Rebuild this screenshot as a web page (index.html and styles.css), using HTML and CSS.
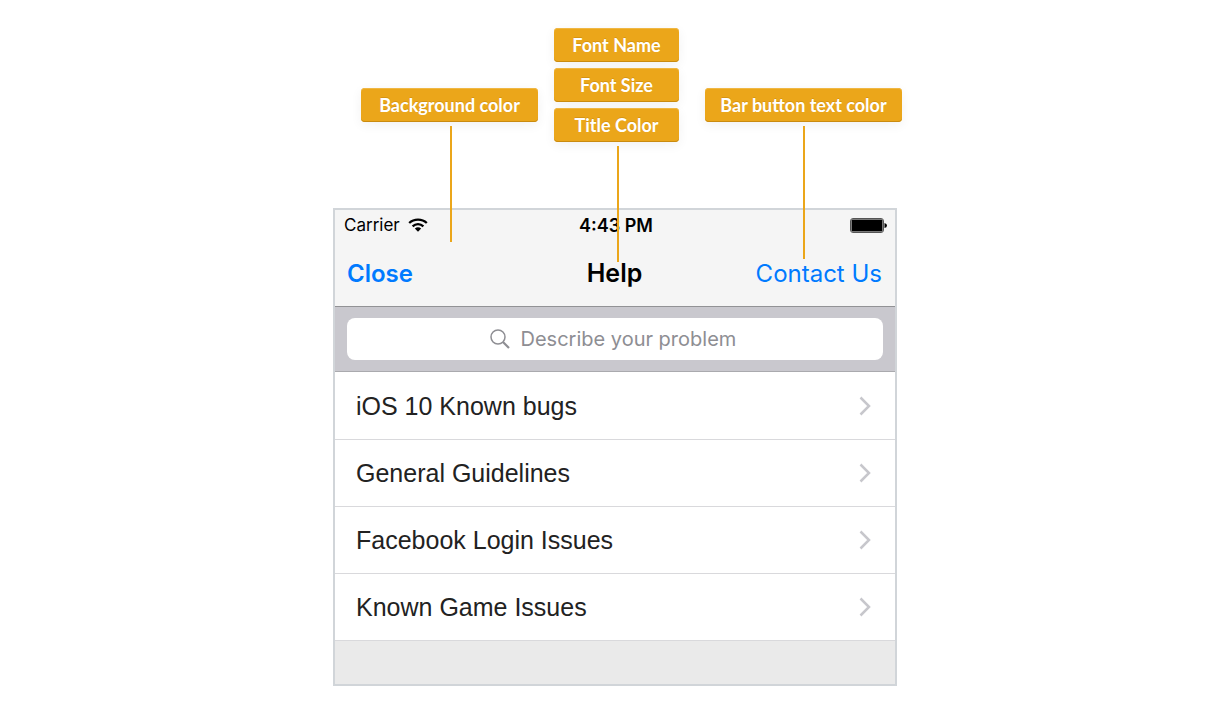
FILE: index.html
```html
<!DOCTYPE html>
<html lang="en">
<head>
<meta charset="utf-8">
<meta name="viewport" content="width=device-width, initial-scale=1">
<title>Help screen theming</title>
<link rel="stylesheet" href="styles.css">
</head>
<body>
<main class="guide">
  <div class="callouts">
    <div class="callout callout-background"><span class="tag">Background color</span></div>
    <div class="callout callout-title">
      <span class="tag">Font Name</span>
      <span class="tag">Font Size</span>
      <span class="tag">Title Color</span>
    </div>
    <div class="callout callout-button"><span class="tag">Bar button text color</span></div>
  </div>

  <section class="phone" aria-label="Help">
    <header class="top">
      <div class="status">
        <div class="carrier">
          <span>Carrier</span>
          <svg class="wifi" viewBox="0 0 20 14" aria-hidden="true">
            <path d="M1.200 5C6 .4 14 .4 18.800 5M4.600 8.300C7.700 5.300 12.300 5.300 15.400 8.300" fill="none" stroke="#000" stroke-width="2.300"/>
            <path d="M6.800 10.500Q10 7.800 13.200 10.500L10 13.700Z"/>
          </svg>
        </div>
        <span class="time">4:43 PM</span>
        <svg class="battery" viewBox="0 0 38 15" aria-hidden="true">
          <rect x=".5" y=".5" width="33" height="14" rx="2.500" fill="none" stroke="#555"/>
          <rect x="1.500" y="1.500" width="31" height="12" rx="1"/>
          <path d="M34.500 5q2.500 .5 2.500 2.500t-2.500 2.500z"/>
        </svg>
      </div>
      <nav class="bar">
        <button class="bar-button close" type="button">Close</button>
        <h1 class="title">Help</h1>
        <button class="bar-button contact" type="button">Contact Us</button>
      </nav>
    </header>

    <div class="search">
      <label class="field">
        <svg class="lens" viewBox="0 0 20 20" aria-hidden="true">
          <circle cx="8" cy="8" r="7" fill="none" stroke="#8e8e93" stroke-width="1.500"/>
          <path d="M13 13l6 6" stroke="#8e8e93" stroke-width="2.200"/>
        </svg>
        <input class="query" type="text" placeholder="Describe your problem" aria-label="Describe your problem">
      </label>
    </div>

    <ul class="topics">
      <li><a class="topic" href="#bugs">iOS 10 Known bugs<svg class="chevron" viewBox="0 0 12 20" aria-hidden="true"><path d="M1.500 1.500L10 10l-8.500 8.500"/></svg></a></li>
      <li><a class="topic" href="#guidelines">General Guidelines<svg class="chevron" viewBox="0 0 12 20" aria-hidden="true"><path d="M1.500 1.500L10 10l-8.500 8.500"/></svg></a></li>
      <li><a class="topic" href="#login">Facebook Login Issues<svg class="chevron" viewBox="0 0 12 20" aria-hidden="true"><path d="M1.500 1.500L10 10l-8.500 8.500"/></svg></a></li>
      <li><a class="topic" href="#game">Known Game Issues<svg class="chevron" viewBox="0 0 12 20" aria-hidden="true"><path d="M1.500 1.500L10 10l-8.500 8.500"/></svg></a></li>
    </ul>
  </section>
</main>
</body>
</html>
```
FILE: styles.css
```css
* { box-sizing: border-box; }

body {
  margin: 0;
  background: #fff;
  font-family: Inter, "Liberation Sans", sans-serif;
}

.guide {
  max-width: 564px;
  margin: 0 auto;
  padding: 28px 0 38px;
}

.callouts {
  display: flex;
  align-items: flex-end;
  margin: 0 -5px 66px 28px;
}

.callout {
  position: relative;
  display: flex;
  flex-direction: column;
  gap: 6px;
}

.callout-background { flex: 0 0 177px; margin-bottom: 20px; }
.callout-title { flex: 0 0 125px; margin-left: 16px; }
.callout-button { flex: 0 0 197px; margin: 0 0 20px 26px; }

/* Pointer from each callout down to the part it names */
.callout::after {
  content: "";
  position: absolute;
  z-index: 1;
  top: calc(100% + 4px);
  left: 50%;
  width: 2px;
  height: 116px;
  background: #eba61a;
}

.callout-button::after { left: 98px; height: 133px; }

.tag {
  height: 34px;
  border-radius: 4px;
  background: #eba61a;
  box-shadow: inset 0 1px #f0b743, inset 0 -1px #ca8b0f, 0 3px 12px rgba(0, 0, 0, 0.06);
  color: #fff;
  font: 700 18px/34px Lato, sans-serif;
  text-align: center;
  text-shadow: 0 -1px rgba(150, 95, 0, 0.25);
  white-space: nowrap;
}

.phone {
  border: 2px solid #d1d5d9;
  background: #eaeaea;
  padding-bottom: 43px;
}

.top {
  background: #f5f5f5;
  border-bottom: 1px solid #929295;
}

.status {
  display: grid;
  grid-template-columns: 1fr auto 1fr;
  align-items: center;
  height: 30px;
  padding: 0 7px 0 9px;
  font-size: 18px;
}

.carrier {
  display: flex;
  align-items: center;
  gap: 8px;
}

.wifi { width: 20px; height: 14px; }
.carrier { font-size: 17px; }
.time { font-weight: 600; }
.battery { width: 38px; height: 15px; justify-self: end; }

.bar {
  display: grid;
  grid-template-columns: 1fr auto 1fr;
  align-items: center;
  height: 66px;
  padding: 0 13px 0 12px;
}

.title {
  margin: 0;
  font-size: 25px;
  font-weight: 600;
}

.bar-button {
  padding: 0;
  border: 0;
  background: none;
  color: #007aff;
  font: 24px Inter, sans-serif;
}

.close { justify-self: start; font-weight: 600; }
.contact { justify-self: end; }

.search {
  padding: 11px 12px;
  background: #c9c8ce;
  border-bottom: 1px solid #aaaaae;
}

.field {
  display: flex;
  align-items: center;
  justify-content: center;
  gap: 11px;
  height: 42px;
  border-radius: 8px;
  background: #fff;
}

.lens { width: 20px; height: 20px; }

.query {
  width: 220px;
  padding: 0;
  border: 0;
  outline: 0;
  background: none;
  font: 20px Inter, sans-serif;
}

.query::placeholder { color: #8e8e93; opacity: 1; }

.topics {
  margin: 0;
  padding: 1px 0 0;
  background: #fff;
  list-style: none;
}

.topic {
  display: flex;
  align-items: center;
  justify-content: space-between;
  height: 67px;
  padding: 0 24px 0 21px;
  border-bottom: 1px solid #d9d9dc;
  color: #222;
  font: 25px "Liberation Sans", Arial, sans-serif;
  text-decoration: none;
}

.chevron {
  width: 12px;
  height: 20px;
  fill: none;
  stroke: #c7c7cc;
  stroke-width: 2.5;
}
```
